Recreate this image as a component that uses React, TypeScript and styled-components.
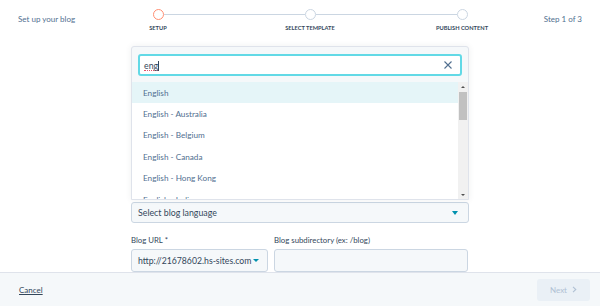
import React from "react";
import styled, { createGlobalStyle } from "styled-components";

const Global = createGlobalStyle`
  html, body { margin: 0; padding: 0; background: #fff; }
  body { font-family: Lato, "Open Sans", sans-serif; color: #33475b; }
  * { box-sizing: border-box; }
`;

const Page = styled.div`
  width: 600px;
  height: 306px;
  display: flex;
  flex-direction: column;
  overflow: hidden;
`;

const Header = styled.header`
  height: 40px;
  display: flex;
  align-items: flex-start;
  flex-shrink: 0;
`;

const Title = styled.div`
  width: 82px;
  padding: 14px 0 0 18px;
  font-size: 8px;
  line-height: 10px;
  color: #516f90;
  white-space: nowrap;
`;

const Stepper = styled.div`
  width: 456px;
  display: grid;
  grid-template-columns: repeat(3, 1fr);
`;

const Step = styled.div`
  display: flex;
  flex-direction: column;
  align-items: center;
`;

const Track = styled.div`
  margin-top: 9px;
  width: 100%;
  height: 11px;
  display: flex;
  align-items: center;
`;

const Line = styled.div<{ $hidden?: boolean }>`
  flex: 1;
  height: 1px;
  background: ${(p) => (p.$hidden ? "transparent" : "#cbd6e2")};
`;

const Dot = styled.div<{ $active?: boolean }>`
  width: 11px;
  height: 11px;
  border-radius: 50%;
  background: #fff;
  border: 1.5px solid ${(p) => (p.$active ? "#ff8f73" : "#cbd6e2")};
  flex-shrink: 0;
`;

const StepLabel = styled.div`
  margin-top: 4px;
  font-size: 5.7px;
  line-height: 7px;
  font-weight: 700;
  color: #33475b;
  text-transform: uppercase;
  white-space: nowrap;
`;

const StepCount = styled.div`
  flex: 1;
  text-align: right;
  padding: 14px 18px 0 0;
  font-size: 8px;
  line-height: 10px;
  color: #516f90;
  white-space: nowrap;
`;

const Main = styled.main`
  flex: 1;
  overflow: hidden;
  position: relative;
`;

const Column = styled.div`
  margin-left: 131px;
  width: 338px;
  padding-top: 162px;
`;

const LanguageField = styled.div`
  position: relative;
`;

const SelectBox = styled.div`
  height: 21px;
  background: #f5f8fa;
  border: 1px solid #cbd6e2;
  border-radius: 3px;
  display: flex;
  align-items: center;
  justify-content: space-between;
  padding: 0 10px 0 6px;
  font-size: 8.8px;
  color: #33475b;
  white-space: nowrap;
  overflow: hidden;
`;

const Caret = styled.span<{ $small?: boolean }>`
  width: 0;
  height: 0;
  border-left: ${(p) => (p.$small ? 3 : 3.5)}px solid transparent;
  border-right: ${(p) => (p.$small ? 3 : 3.5)}px solid transparent;
  border-top: ${(p) => (p.$small ? 3.5 : 4)}px solid #0091ae;
  flex-shrink: 0;
`;

const Dropdown = styled.div`
  position: absolute;
  left: 0;
  right: 0;
  bottom: calc(100% + 2px);
  height: 154px;
  background: #f5f8fa;
  border: 1px solid #dfe3eb;
  border-radius: 3px 3px 0 0;
  box-shadow: 0 0 6px rgba(45, 62, 80, 0.08);
  padding-top: 7px;
  display: flex;
  flex-direction: column;
`;

const SearchBox = styled.div`
  margin: 0 6px;
  height: 22px;
  background: #fff;
  border: 2px solid #62d9e6;
  border-radius: 3px;
  display: flex;
  align-items: center;
  justify-content: space-between;
  padding: 0 8px 0 4px;
  font-size: 8.8px;
  color: #33475b;
`;

const Typed = styled.span`
  border-bottom: 1px dotted #e0506a;
  padding-bottom: 0;
  line-height: 9px;
  display: inline-block;
`;

const Cursor = styled.span`
  display: inline-block;
  width: 1px;
  height: 10px;
  background: #33475b;
  vertical-align: -2px;
`;

const List = styled.div`
  margin-top: 6px;
  height: 117px;
  background: #fff;
  display: flex;
`;

const Items = styled.div`
  flex: 1;
  overflow: hidden;
`;

const Item = styled.div<{ $active?: boolean }>`
  height: 21.4px;
  display: flex;
  align-items: center;
  padding-left: 11px;
  font-size: 8.2px;
  color: #516f90;
  background: ${(p) => (p.$active ? "#e5f5f8" : "#fff")};
  white-space: nowrap;
`;

const Scrollbar = styled.div`
  width: 10px;
  background: #f1f1f1;
  display: flex;
  flex-direction: column;
  align-items: center;
`;

const ScrollArrow = styled.div<{ $down?: boolean }>`
  height: 9px;
  display: flex;
  align-items: center;
  justify-content: center;
  &::before {
    content: "";
    border-left: 2.5px solid transparent;
    border-right: 2.5px solid transparent;
    ${(p) => (p.$down ? "border-top" : "border-bottom")}: 2.5px solid #505050;
  }
`;

const ScrollThumb = styled.div`
  margin-top: 1px;
  width: 8px;
  height: 28px;
  background: #c1c1c1;
`;

const ScrollSpace = styled.div`
  flex: 1;
`;

const UrlRow = styled.div`
  margin-top: 12px;
  display: grid;
  grid-template-columns: 137px 194px;
  column-gap: 6px;
`;

const Field = styled.div`
  display: flex;
  flex-direction: column;
`;

const Label = styled.label`
  font-size: 7.8px;
  line-height: 10px;
  color: #33475b;
  margin-bottom: 4px;
  white-space: nowrap;
`;

const Input = styled.div`
  height: 23px;
  background: #f5f8fa;
  border: 1px solid #cbd6e2;
  border-radius: 3px;
  display: flex;
  align-items: center;
  justify-content: space-between;
  padding: 0 8px 0 6px;
  font-size: 8.7px;
  color: #33475b;
  white-space: nowrap;
`;

const Footer = styled.footer`
  height: 34px;
  flex-shrink: 0;
  background: #f5f8fa;
  border-top: 1px solid #dfe3eb;
  display: flex;
  align-items: center;
  justify-content: space-between;
  padding: 0 10px 0 19px;
`;

const Cancel = styled.a`
  font-size: 8px;
  color: #33475b;
  text-decoration: underline;
  cursor: pointer;
`;

const NextButton = styled.button`
  width: 53px;
  height: 22px;
  border: none;
  border-radius: 3px;
  background: #eaf0f6;
  color: #b0c1d4;
  font-family: inherit;
  font-size: 8px;
  display: flex;
  align-items: center;
  justify-content: center;
  gap: 5px;
  padding: 0;
`;

const steps = ["Setup", "Select template", "Publish content"];
const languages = [
  "English",
  "English - Australia",
  "English - Belgium",
  "English - Canada",
  "English - Hong Kong",
  "English - India",
];

export default function App() {
  return (
    <Page>
      <Global />
      <Header>
        <Title>Set up your blog</Title>
        <Stepper>
          {steps.map((s, i) => (
            <Step key={s}>
              <Track>
                <Line $hidden={i === 0} />
                <Dot $active={i === 0} />
                <Line $hidden={i === steps.length - 1} />
              </Track>
              <StepLabel>{s}</StepLabel>
            </Step>
          ))}
        </Stepper>
        <StepCount>Step 1 of 3</StepCount>
      </Header>
      <Main>
        <Column>
          <LanguageField>
            <Dropdown>
              <SearchBox>
                <span>
                  <Typed>eng</Typed>
                  <Cursor />
                </span>
                <svg width="8" height="8" viewBox="0 0 8 8">
                  <path d="M0.5 0.5 L7.5 7.5 M7.5 0.5 L0.5 7.5" stroke="#516f90" strokeWidth="1.1" />
                </svg>
              </SearchBox>
              <List>
                <Items>
                  {languages.map((l, i) => (
                    <Item key={l} $active={i === 0}>
                      {l}
                    </Item>
                  ))}
                </Items>
                <Scrollbar>
                  <ScrollArrow />
                  <ScrollThumb />
                  <ScrollSpace />
                  <ScrollArrow $down />
                </Scrollbar>
              </List>
            </Dropdown>
            <SelectBox>
              <span>Select blog language</span>
              <Caret />
            </SelectBox>
          </LanguageField>
          <UrlRow>
            <Field>
              <Label>Blog URL *</Label>
              <Input>
                <span>http://21678602.hs-sites.com</span>
                <Caret $small />
              </Input>
            </Field>
            <Field>
              <Label>Blog subdirectory (ex: /blog)</Label>
              <Input />
            </Field>
          </UrlRow>
        </Column>
      </Main>
      <Footer>
        <Cancel>Cancel</Cancel>
        <NextButton disabled>
          Next
          <svg width="5" height="7" viewBox="0 0 5 7">
            <path d="M1 0.8 L3.8 3.5 L1 6.2" stroke="#b0c1d4" strokeWidth="1.1" fill="none" />
          </svg>
        </NextButton>
      </Footer>
    </Page>
  );
}
